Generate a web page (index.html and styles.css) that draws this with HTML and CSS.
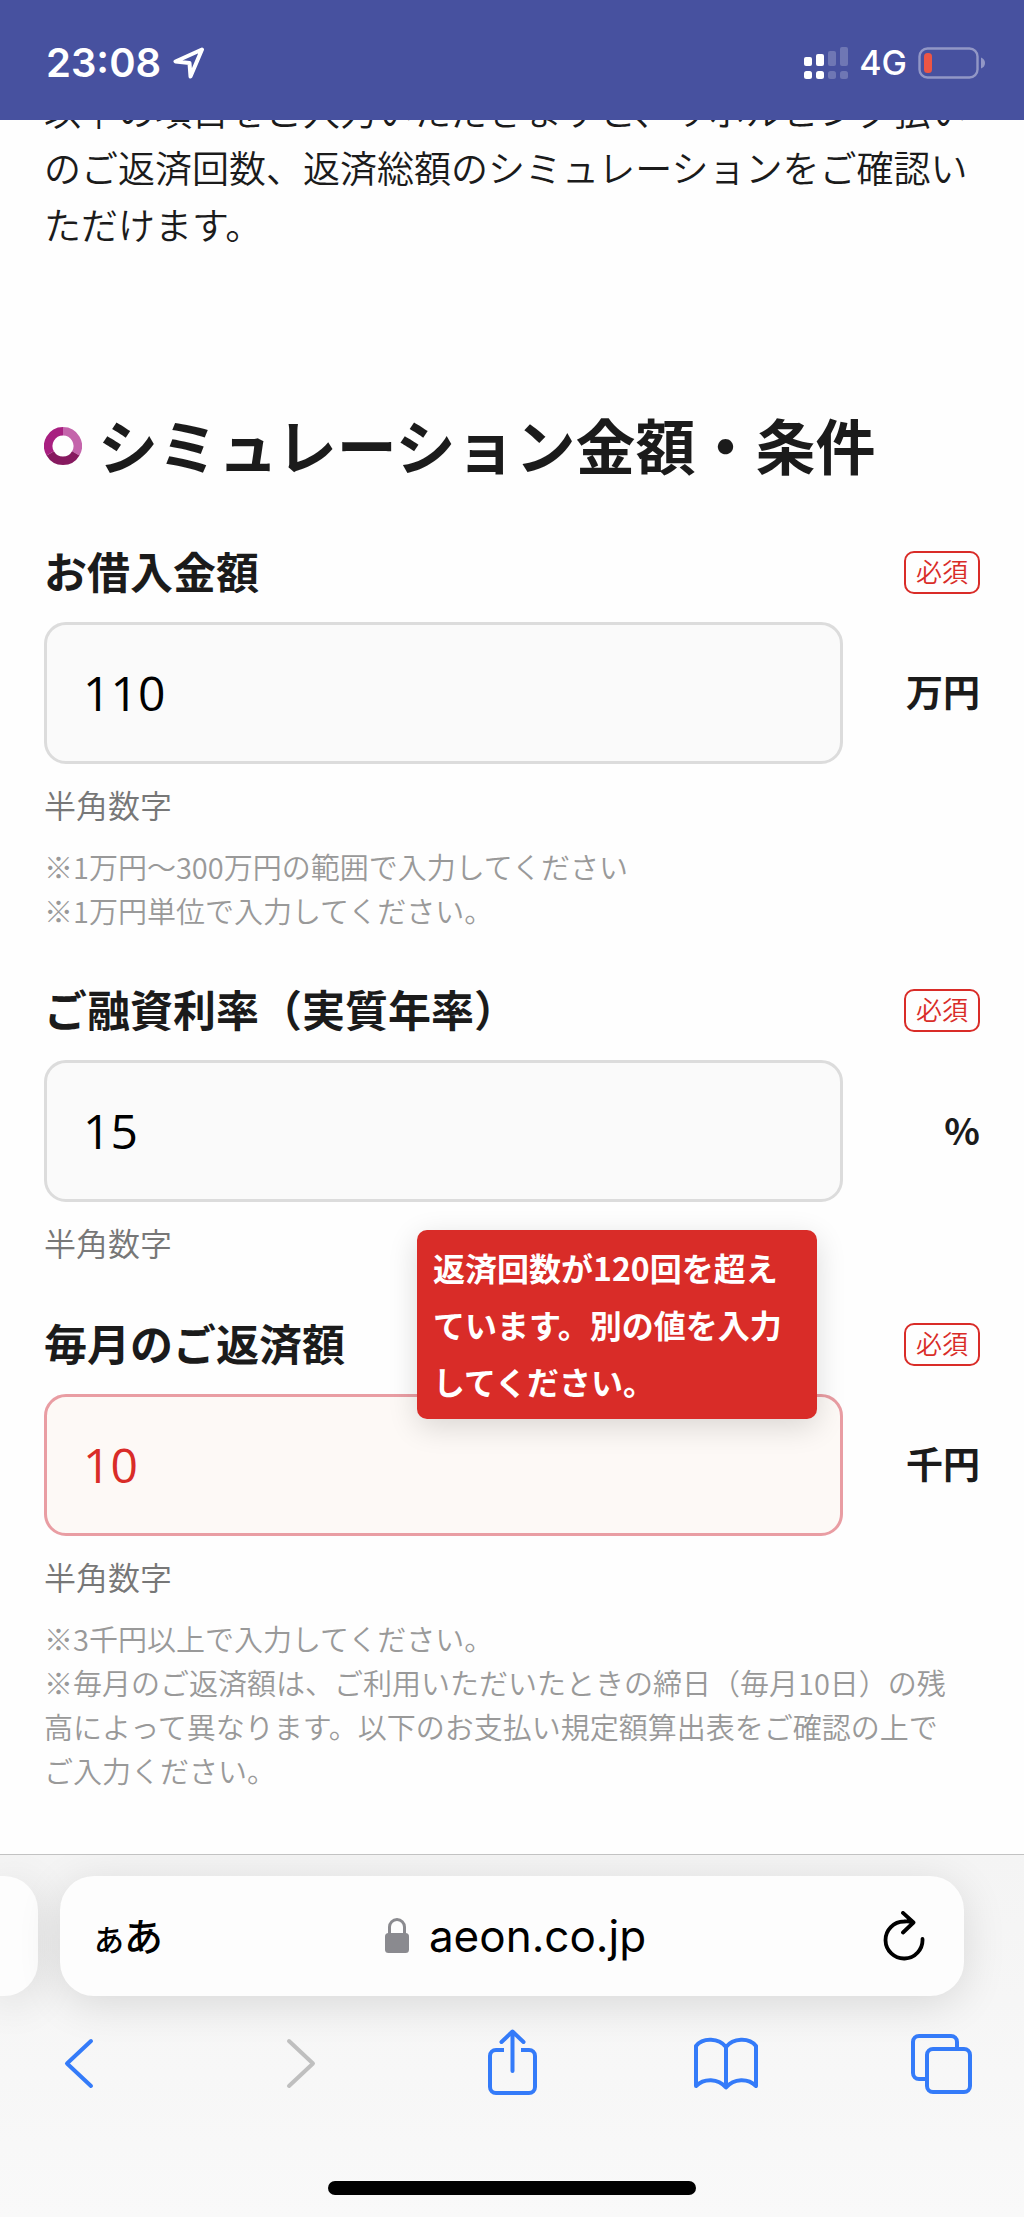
FILE: index.html
```
<!DOCTYPE html>
<html lang="ja">
<head>
<meta charset="utf-8">
<meta name="viewport" content="width=device-width, initial-scale=1">
<title>返済シミュレーション</title>
<link rel="stylesheet" href="styles.css">
</head>
<body>
<header class="status">
  <div class="status-left">
    <span class="clock">23:08</span>
    <svg width="32" height="32" viewBox="0 0 32 32" fill="none" stroke="#fff" stroke-width="4" stroke-linejoin="round" aria-hidden="true"><path d="M29 2.500 2.500 14.500 16.500 16 17.500 29.500Z"/></svg>
  </div>
  <div class="status-right">
    <svg width="44" height="32" viewBox="0 0 44 32" fill="#fff" aria-hidden="true">
      <rect x="0" y="10" width="8" height="9" rx="2"/><rect x="12" y="7" width="8" height="12" rx="2"/>
      <rect x="0" y="24" width="8" height="8" rx="2.500"/><rect x="12" y="24" width="8" height="8" rx="2.500"/>
      <g fill-opacity=".22"><rect x="24" y="4" width="8" height="15" rx="2"/><rect x="36" y="0" width="8" height="19" rx="2"/><rect x="24" y="24" width="8" height="8" rx="2.500"/><rect x="36" y="24" width="8" height="8" rx="2.500"/></g>
    </svg>
    <span class="network">4G</span>
    <svg width="68" height="32" viewBox="0 0 68 32" aria-hidden="true"><rect x="1.500" y="1.500" width="58" height="29" rx="8" fill="none" stroke="#9297c6" stroke-width="2.400"/><path d="M63 10.500q4 1.500 4 5.500t-4 5.500z" fill="#9297c6"/><rect x="6" y="6" width="8" height="20" rx="3.500" fill="#ec5545"/></svg>
  </div>
</header>

<div class="viewport">
<main class="page">
  <p class="intro">以下の項目をご入力いただきますと、リボルビング払いのご返済回数、返済総額のシミュレーションをご確認いただけます。</p>

  <h1 class="title">
    <svg width="38" height="38" viewBox="0 0 38 38" fill="none" stroke-width="8.500" aria-hidden="true"><path d="M19 4.250a14.750 14.750 0 0 1 12.770 22.120" stroke="#c464ab"/><path d="M31.770 26.370a14.750 14.750 0 0 1-25.540 0" stroke="#86195f"/><path d="M6.230 26.370A14.750 14.750 0 0 1 19 4.250" stroke="#a81f80"/></svg>
    <span class="title-text">シミュレーション金額・条件</span>
  </h1>

  <form class="form">
    <div class="field">
      <div class="field-head"><label for="amount">お借入金額</label><span class="required">必須</span></div>
      <div class="field-row"><input id="amount" type="text" inputmode="numeric" value="110"><span class="unit">万円</span></div>
      <p class="hint">半角数字</p>
      <p class="note">※1万円～300万円の範囲で入力してください<br>※1万円単位で入力してください。</p>
    </div>

    <div class="field">
      <div class="field-head"><label for="rate">ご融資利率（実質年率）</label><span class="required">必須</span></div>
      <div class="field-row"><input id="rate" type="text" inputmode="decimal" value="15"><span class="unit">%</span></div>
      <p class="hint">半角数字</p>
    </div>

    <div class="field">
      <div class="field-head"><label for="monthly">毎月のご返済額</label><span class="required">必須</span></div>
      <div class="field-row">
        <div class="control">
          <input id="monthly" class="invalid" type="text" inputmode="numeric" value="10" aria-invalid="true" aria-describedby="monthly-error">
          <p id="monthly-error" class="error" role="alert">返済回数が120回を超えています。別の値を入力してください。</p>
        </div>
        <span class="unit">千円</span>
      </div>
      <p class="hint">半角数字</p>
      <p class="note">※3千円以上で入力してください。<br>※毎月のご返済額は、ご利用いただいたときの締日（毎月10日）の残高によって異なります。以下のお支払い規定額算出表をご確認の上でご入力ください。</p>
    </div>
  </form>
</main>
</div>

<footer class="browser">
  <div class="tabs">
    <div class="tab-previous"></div>
    <div class="address">
      <button class="reader" type="button" aria-label="ページ設定"><span class="reader-small">あ</span>あ</button>
      <div class="domain">
        <svg width="24" height="36" viewBox="0 0 24 36" aria-hidden="true"><rect y="15" width="24" height="20" rx="3.500" fill="#8a8a8f"/><path d="M4.500 16V9a7.500 7.500 0 0 1 15 0v7" fill="none" stroke="#8a8a8f" stroke-width="3"/></svg>
        <span>aeon.co.jp</span>
      </div>
      <button class="reload" type="button" aria-label="再読み込み"><svg width="42" height="50" viewBox="0 0 42 50" fill="none" stroke="#000" stroke-width="3.800" stroke-linecap="round" stroke-linejoin="round"><path d="M39.500 28A18.500 18.500 0 1 1 21 10.500q5-.5 9 .7M20 1.900 30.500 11.500 20 21.500"/></svg></button>
    </div>
  </div>
  <nav class="toolbar" aria-label="ブラウザ">
    <button type="button" aria-label="戻る"><svg viewBox="0 0 66 70" stroke="#347bf9"><path d="M45 13 21 35.500 45 58"/></svg></button>
    <button type="button" aria-label="進む" disabled><svg viewBox="0 0 66 70" stroke="#bfbfbf"><path d="M27 13 51 35.500 27 58"/></svg></button>
    <button type="button" aria-label="共有"><svg viewBox="0 0 66 70" stroke="#347bf9"><path d="M26 22H18a6 6 0 0 0-6 6v31a6 6 0 0 0 6 6h33a6 6 0 0 0 6-6V28a6 6 0 0 0-6-6h-8" stroke-linecap="butt"/><path d="M34.500 43V4M23.500 14 34.500 3.500 45.500 14"/></svg></button>
    <button type="button" aria-label="ブックマーク"><svg viewBox="0 0 66 70" stroke="#347bf9"><path d="M33 19v40M33 19C26 10 10 9 3 18v40c8-8 22-8 30 1.500C41 50 55 50 63 58V18C56 9 40 10 33 19"/></svg></button>
    <button type="button" aria-label="タブ"><svg viewBox="0 0 66 70" stroke="#347bf9"><rect x="18" y="21" width="43" height="43" rx="6"/><path d="M48 21v-7a6 6 0 0 0-6-6H10a6 6 0 0 0-6 6v31a6 6 0 0 0 6 6h8"/></svg></button>
  </nav>
  <div class="home-indicator"></div>
</footer>
</body>
</html>
```
FILE: styles.css
```
* { box-sizing: border-box; }
html, body, p, h1 { margin: 0; }

body {
  min-height: 100vh;
  display: flex;
  flex-direction: column;
  background: #fefefe;
  color: #1b1b1b;
  font-family: "Noto Sans CJK JP", sans-serif;
}

button {
  padding: 0;
  border: 0;
  background: none;
  color: #000;
  font: inherit;
}
svg { display: block; flex: none; }

.status {
  height: 120px;
  padding: 6px 38px 0 46px;
  display: flex;
  align-items: center;
  justify-content: space-between;
  background: #47519f;
  color: #fff;
  font-family: Inter, sans-serif;
}
.status-left { display: flex; align-items: center; gap: 12px; }
.status-right { display: flex; align-items: center; gap: 11px; }
.clock { font-size: 40px; font-weight: 600; line-height: 48px; }
.network { font-size: 34px; font-weight: 500; line-height: 40px; }

/* The page is scrolled: its first line is cut by the status bar. */
.viewport { flex: 1; overflow: hidden; }
.page {
  margin-top: -38px;
  padding: 0 44px 56px;
}
.intro { font-size: 37px; font-weight: 350; line-height: 57px; }
.title {
  margin-top: 157px;
  display: flex;
  align-items: center;
  gap: 16px;
  font-size: 60px;
  font-weight: 700;
  line-height: 68px;
}
.title-text { padding-bottom: 4px; }
.form {
  margin-top: 58px;
  display: flex;
  flex-direction: column;
  gap: 46px;
}
.field-head, .field-row {
  display: flex;
  align-items: center;
  justify-content: space-between;
}
.field-head {
  height: 64px;
  margin-bottom: 18px;
  font-size: 43px;
  font-weight: 700;
  line-height: 60px;
}
.field-head label { padding-bottom: 4px; }
.required {
  height: 43px;
  padding: 0 10px;
  border: 2px solid #d92c28;
  border-radius: 10px;
  color: #d92c28;
  font-size: 26px;
  font-weight: 350;
  line-height: 36px;
}
.field-row { gap: 44px; }
.control { position: relative; flex: 1; display: flex; }
.field-row input {
  flex: 1;
  min-width: 0;
  height: 142px;
  padding: 0 36px 2px;
  border: 3px solid #dcdcdc;
  border-radius: 22px;
  background: #fafafa;
  color: #000;
  font-family: "Open Sans", sans-serif;
  font-size: 48px;
}
.field-row input.invalid {
  border-color: #e99da3;
  background: #fdf9f6;
  color: #d92c28;
}
.unit {
  width: 93px;
  padding-bottom: 4px;
  text-align: right;
  font-size: 37px;
  font-weight: 700;
  line-height: 56px;
}
.hint {
  margin-top: 16px;
  color: #777;
  font-size: 32px;
  font-weight: 350;
  line-height: 48px;
}
.note {
  margin-top: 16px;
  padding-right: 20px;
  color: #999;
  font-size: 29px;
  font-weight: 350;
  line-height: 44px;
}
.error {
  position: absolute;
  right: 26px;
  bottom: 117px;
  width: 400px;
  padding: 9px 16px;
  border-radius: 10px;
  background: #d92c28;
  box-shadow: 0 8px 30px rgba(0, 0, 0, .14);
  color: #fff;
  font-size: 32px;
  font-weight: 700;
  line-height: 57px;
}

.browser {
  height: 363px;
  padding-top: 21px;
  display: flex;
  flex-direction: column;
  overflow: hidden;
  border-top: 1px solid #c2c2c2;
  background: linear-gradient(#f4f4f4, #f9f9f9);
}
.tabs { display: flex; gap: 22px; padding-right: 60px; }
.tab-previous, .address {
  height: 120px;
  background: #fdfdfd;
  box-shadow: 0 8px 44px rgba(0, 0, 0, .12);
}
.tab-previous { width: 38px; border-radius: 0 34px 34px 0; }
.address {
  flex: 1;
  padding: 0 39px 0 34px;
  display: grid;
  grid-template-columns: 1fr auto 1fr;
  align-items: center;
  border-radius: 34px;
}
.reader { justify-self: start; font-size: 39px; font-weight: 500; line-height: 56px; }
.reader-small { font-size: 30px; }
.reload { justify-self: end; }
.domain {
  padding-left: 12px;
  display: flex;
  align-items: center;
  gap: 20px;
  color: #000;
  font-family: Inter, sans-serif;
  font-size: 44px;
  line-height: 56px;
}
.toolbar {
  margin-top: 32px;
  padding: 0 49px 0 46px;
  display: flex;
  justify-content: space-between;
}
.toolbar svg {
  width: 66px;
  height: 70px;
  fill: none;
  stroke-width: 4;
  stroke-linecap: round;
  stroke-linejoin: round;
}
.home-indicator {
  width: 36%;
  height: 14px;
  margin: auto auto 22px;
  border-radius: 7px;
  background: #000;
}
```
